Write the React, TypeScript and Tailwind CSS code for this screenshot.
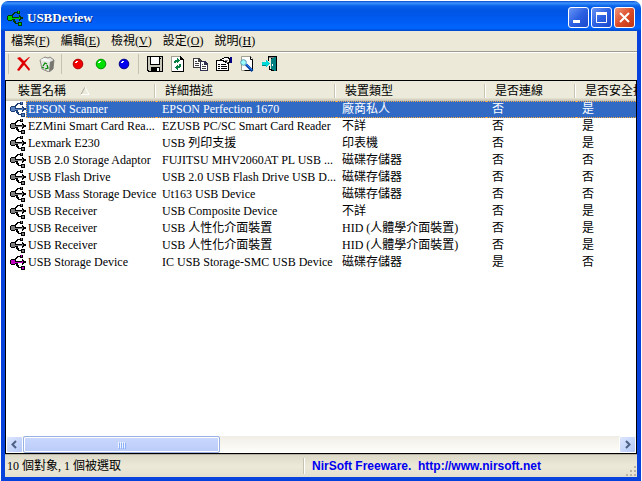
import type { ReactNode } from 'react';
import clsx from 'clsx';

type Device = {
  name: string;
  description: string;
  type: string;
  connected: string;
  safe: string;
  color: string;
  selected?: boolean;
};

const MENU = [
  { label: '檔案', hotkey: 'F' },
  { label: '編輯', hotkey: 'E' },
  { label: '檢視', hotkey: 'V' },
  { label: '設定', hotkey: 'O' },
  { label: '說明', hotkey: 'H' },
];

const COLUMNS = ['裝置名稱', '詳細描述', '裝置類型', '是否連線', '是否安全拔除'];

const GRAY = '#808080';

const DEVICES: Device[] = [
  { name: 'EPSON Scanner', description: 'EPSON Perfection 1670', type: '廠商私人', connected: '否', safe: '是', color: '#5a82c0', selected: true },
  { name: 'EZMini Smart Card Rea...', description: 'EZUSB PC/SC Smart Card Reader', type: '不詳', connected: '否', safe: '是', color: GRAY },
  { name: 'Lexmark E230', description: 'USB 列印支援', type: '印表機', connected: '否', safe: '是', color: GRAY },
  { name: 'USB 2.0 Storage Adaptor', description: 'FUJITSU MHV2060AT PL USB ...', type: '磁碟存儲器', connected: '否', safe: '否', color: GRAY },
  { name: 'USB Flash Drive', description: 'USB 2.0 USB Flash Drive USB D...', type: '磁碟存儲器', connected: '否', safe: '否', color: GRAY },
  { name: 'USB Mass Storage Device', description: 'Ut163 USB Device', type: '磁碟存儲器', connected: '否', safe: '否', color: GRAY },
  { name: 'USB Receiver', description: 'USB Composite Device', type: '不詳', connected: '否', safe: '是', color: GRAY },
  { name: 'USB Receiver', description: 'USB 人性化介面裝置', type: 'HID (人體學介面裝置)', connected: '否', safe: '是', color: GRAY },
  { name: 'USB Receiver', description: 'USB 人性化介面裝置', type: 'HID (人體學介面裝置)', connected: '否', safe: '是', color: GRAY },
  { name: 'USB Storage Device', description: 'IC USB Storage-SMC USB Device', type: '磁碟存儲器', connected: '是', safe: '否', color: '#c000c0' },
];

const Icon = ({ children }: { children: ReactNode }) => (
  <svg className="size-4 shrink-0" viewBox="0 0 16 16" shapeRendering="crispEdges" aria-hidden="true">
    {children}
  </svg>
);

const UsbIcon = ({ color, line = '#000' }: { color: string; line?: string }) => (
  <Icon>
    <path d="M1 5h4v1h1v1h6V5h1v1h1v1h2v2h-2v1h-1v1h-1V9H6v1H5v1H1v-1H0V6h1z" fill={line} />
    <path d="M1 6h4v4H1zM5 8h8v1H5zM12 7h1v2h-1z" fill={color} />
    <path d="M5 7V4h1V3h1V2h3v1H8v1H7v1H6v2zM10 1h3v3h-3z" fill={line} />
    <path d="M11 1h1v2h-1z" fill={color} />
    <path d="M7 9h1v2h1v2h2v-1h4v4h-4v-2H8v-1H7v-1H6V9z" fill={line} />
    <path d="M12 13h2v2h-2z" fill={color} />
  </Icon>
);

const DeleteIcon = () => (
  <svg className="size-4" viewBox="0 0 16 16" aria-hidden="true">
    <path d="M1 2l3-1 4 4 5-4h1L9 7l5 6-1 2-5-6-5 6-2-1 5-7z" fill="#e00000" />
  </svg>
);

const RecycleIcon = () => (
  <svg className="size-4" viewBox="0 0 16 16" aria-hidden="true">
    <path d="M1 4l5-3 3 1 2-1 4 3-1 9-4 3-7-3z" fill="#e4e4e0" stroke="#8a8a82" />
    <path d="M11 6l4-2-1 9-4 3z" fill="#77776f" />
    <path d="M1 4l4-2 6 2-1 2z" fill="#f8f8f8" />
    <path d="M4 10l2-3 2 1M8 9l1 3-3 1M3 11l2 1" fill="none" stroke="#008800" strokeWidth="1.3" />
  </svg>
);

const BallIcon = ({ color, edge }: { color: string; edge: string }) => (
  <svg className="size-4" viewBox="0 0 16 16" aria-hidden="true">
    <circle cx="8" cy="8" r="4.8" fill={color} stroke={edge} />
    <path d="M5 6h1V5h2v1H7v1H5z" fill="#fff" />
  </svg>
);

const SaveIcon = () => (
  <Icon>
    <path d="M0 0h16v16H1v-1H0z" fill="#000" />
    <path d="M1 1h2v8h10V1h2v14h-2v-4H4v4H2v-1H1z" fill="#c9c7ba" />
    <path d="M4 1h8v7H4z" fill="#fff" />
    <path d="M10 12h2v3h-2z" fill="#fff" />
    <path d="M13 2h1v1h-1z" fill="#000" />
  </Icon>
);

const RefreshIcon = () => (
  <Icon>
    <path d="M1 0h10v1h1v1h1v1h1v13H1z" fill="#000" />
    <path d="M2 1h8v3h3v11H2z" fill="#fff" />
    <path d="M1 0h1v16H1zM1 0h9v1H1z" fill="#a0a090" />
    <path d="M4 7V5h1V4h2V2h1v1h1v1h1v1H9v1H8v1H7V6H6v1zM11 8v3h-1v1H8v2H7v-1H6v-1H5v-1h1v-1h1V9h1v1h1V8z" fill="#008040" />
  </Icon>
);

const CopyIcon = () => (
  <Icon>
    <path d="M0 2h6l3 3v7H0z" fill="#404040" />
    <path d="M1 3h4v3h3v5H1z" fill="#fff" />
    <path d="M2 5h2v1H2zM2 7h4v1H2zM2 9h4v1H2z" fill="#404040" />
    <path d="M7 5h5l3 3v7H7z" fill="#303050" />
    <path d="M8 6h3v3h3v5H8z" fill="#fff" />
    <path d="M9 8h1v1H9zM9 10h4v1H9zM9 12h4v1H9z" fill="#404040" />
  </Icon>
);

const PropertiesIcon = () => (
  <Icon>
    <path d="M0 4h13v11H0z" fill="#000" />
    <path d="M1 5h11v9H1z" fill="#fff" />
    <path d="M2 8h2v1H2zM5 8h5v1H5zM2 10h2v1H2zM5 10h6v1H5zM2 12h2v1H2zM5 12h6v1H5z" fill="#000" />
    <path d="M4 3h2V2h2V1h5v1h3v5h-3v1h-2V7H9V6H7V5H4z" fill="#000" />
    <path d="M6 3h2V2h4v1h1v3h-2V5H8V4H6z" fill="#fff" />
    <path d="M9 4h3v1H9zM10 6h2v1h-2z" fill="#808080" />
    <path d="M14 1h2v6h-2z" fill="#000080" />
  </Icon>
);

const FindIcon = () => (
  <svg className="size-4" viewBox="0 0 16 16" aria-hidden="true">
    <path d="M2.500.5h9l2 2v12h-11z" fill="#fff" stroke="#a0a090" />
    <path d="M11.500.5v3h2v11h-8" fill="none" stroke="#000" />
    <circle cx="4.500" cy="6.500" r="2.800" fill="#9ff" stroke="#5a9ab0" />
    <path d="M7 8.500l6.500 6.500" stroke="#0040a0" strokeWidth="2.500" />
    <path d="M7 8l6 6" stroke="#2080ff" />
  </svg>
);

const ExitIcon = () => (
  <Icon>
    <path d="M6 0h9v15H9v-1H7v-4h1v3h1V2H7v3H6z" fill="#000" />
    <path d="M7 1h5v1H7z" fill="#808080" />
    <path d="M9 3h1V2h2V1h2v14h-2v-1h-2v-1H9z" fill="#008080" />
    <path d="M10 8h1v2h-1z" fill="#fff" />
    <path d="M0 6h4V4h1v1h1v1h1v1h1v1H7v1H6v1H5v1H4V9H0z" fill="#00d8d8" />
    <path d="M0 9h4v1H0z" fill="#008080" />
  </Icon>
);

const TOOLS: { label: string; icon: ReactNode }[][] = [
  [
    { label: 'Delete', icon: <DeleteIcon /> },
    { label: 'Uninstall', icon: <RecycleIcon /> },
  ],
  [
    { label: 'Disconnect', icon: <BallIcon color="#f00000" edge="#b00000" /> },
    { label: 'Enable', icon: <BallIcon color="#00e000" edge="#009000" /> },
    { label: 'Disable', icon: <BallIcon color="#0000f0" edge="#000080" /> },
  ],
  [
    { label: 'Save', icon: <SaveIcon /> },
    { label: 'Refresh', icon: <RefreshIcon /> },
    { label: 'Copy', icon: <CopyIcon /> },
    { label: 'Properties', icon: <PropertiesIcon /> },
    { label: 'Find', icon: <FindIcon /> },
    { label: 'Exit', icon: <ExitIcon /> },
  ],
];

const WindowButton = ({ label, close, children }: { label: string; close?: boolean; children: ReactNode }) => (
  <button
    aria-label={label}
    className={clsx(
      'size-[21px] rounded-[3px] border border-white bg-linear-to-br',
      close ? 'from-[#ee9478] via-[#dc4c28] to-[#c03410]' : 'from-[#6a94f4] via-[#2c60e2] to-[#1c48cc]',
    )}
  >
    <svg className="size-[19px]" viewBox="0 0 19 19" fill="none" stroke="#fff" aria-hidden="true">
      {children}
    </svg>
  </button>
);

const TitleBar = () => (
  <header className="flex h-[30px] shrink-0 items-center rounded-t-[7px] bg-[linear-gradient(#0a48c8_0,#3d95ff_2px,#0a62ea_5px,#0055e3_10px,#005cf4_20px,#0066ff_27px,#0048cc_30px)] px-[6px] pt-[3px]">
    <UsbIcon color="#00d000" line="#003800" />
    <h1 className="ml-1 flex-1 text-[13px] font-bold text-white [text-shadow:1px_1px_#0a2a80]">USBDeview</h1>
    <div className="flex gap-[2px]">
      <WindowButton label="Minimize">
        <path d="M4 13.500h7" strokeWidth="3" />
      </WindowButton>
      <WindowButton label="Maximize">
        <path d="M4.500 5v9.500h10V5" />
        <path d="M4 5.500h11" strokeWidth="3" />
      </WindowButton>
      <WindowButton label="Close" close>
        <path d="M5 5l9 9M14 5l-9 9" strokeWidth="2" />
      </WindowButton>
    </div>
  </header>
);

const MenuBar = () => (
  <nav className="flex h-5 shrink-0 items-center gap-px pl-px">
    {MENU.map(({ label, hotkey }) => (
      <button key={hotkey} className="px-[5px]">
        {label}(<u>{hotkey}</u>)
      </button>
    ))}
  </nav>
);

const ToolBar = () => (
  <div className="flex h-[29px] shrink-0 border-t border-[#9d9b8e] pl-[3px] shadow-[inset_0_1px_#fff]">
    {TOOLS.map((group, i) => (
      <div key={i} className="flex h-6 items-center">
        <span className={clsx('h-5 w-px bg-[#c5c2b2]', i === 0 ? 'mr-[3px]' : 'mr-1 ml-[3px]')} />
        {group.map(({ label, icon }) => (
          <button key={label} aria-label={label} className="flex h-[22px] w-[23px] items-center justify-center">
            {icon}
          </button>
        ))}
      </div>
    ))}
  </div>
);

const Cell = ({ selected, first, children }: { selected?: boolean; first?: boolean; children: ReactNode }) => (
  <div
    className={clsx(
      'h-[17px] flex-1 border-y border-dotted leading-[15px] whitespace-nowrap',
      first ? 'border-l pl-px' : 'pl-[6px]',
      selected ? 'border-[#f0a848] bg-[#316ac5] text-white' : 'border-transparent',
    )}
  >
    {children}
  </div>
);

const DeviceTable = () => (
  <div className="flex-1 overflow-hidden">
    <table className="w-[720px] table-fixed border-collapse text-left">
      <colgroup>
        <col className="w-[150px]" />
        <col className="w-[180px]" />
        <col className="w-[150px]" />
        <col className="w-[90px]" />
        <col />
      </colgroup>
      <thead>
        <tr className="bg-[linear-gradient(#ebeadb_17px,#e2decd_17px,#e2decd_18px,#d6d2c2_18px,#d6d2c2_19px,#cbc7b8_19px)]">
          {COLUMNS.map((title, i) => (
            <th key={title} className="h-5 p-0 font-normal">
              <div className={clsx('flex items-center whitespace-nowrap', i === 0 ? 'pl-3' : 'pl-[9px]')}>
                <span className="leading-[18px]">{title}</span>
                {i === 0 && (
                  <svg className="ml-[14px] size-[10px]" viewBox="0 0 10 10" fill="none" aria-hidden="true">
                    <path d="M5 1L1 8.500" stroke="#aca899" />
                    <path d="M5 1l4 7.500H1" stroke="#fff" />
                  </svg>
                )}
                <span className="ml-auto h-[14px] w-[2px] border-l border-[#c7c5b2] bg-white" />
              </div>
            </th>
          ))}
        </tr>
      </thead>
      <tbody>
        {DEVICES.map((device, i) => (
          <tr key={i}>
            <td className="p-0">
              <div className="flex pl-1">
                <UsbIcon color={device.color} line={device.selected ? '#1c3f78' : '#000'} />
                <Cell selected={device.selected} first>
                  {device.name}
                </Cell>
              </div>
            </td>
            {[device.description, device.type, device.connected, device.safe].map((text, j) => (
              <td key={j} className="p-0">
                <Cell selected={device.selected}>{text}</Cell>
              </td>
            ))}
          </tr>
        ))}
      </tbody>
    </table>
  </div>
);

const ScrollButton = ({ label, path }: { label: string; path: string }) => (
  <button
    aria-label={label}
    className="flex w-[17px] items-center justify-center rounded-[2px] border border-white bg-linear-to-br from-[#dce6fe] to-[#b4c8f6]"
  >
    <svg className="size-[9px]" viewBox="0 0 9 9" fill="none" stroke="#4d6185" strokeWidth="2" aria-hidden="true">
      <path d={path} />
    </svg>
  </button>
);

const ScrollBar = () => (
  <div className="flex h-[17px] shrink-0 bg-linear-to-b from-[#f0eee6] to-[#fefefb]">
    <ScrollButton label="Scroll left" path="M6 1L2.500 4.500 6 8" />
    <div className="flex flex-1">
      <div className="flex w-[33%] items-center justify-center gap-px rounded-[2px] border border-[#98b0e4] bg-linear-to-b from-[#cad8fd] to-[#bacbf8] shadow-[inset_0_0_0_1px_#fff]">
        {[0, 1, 2, 3].map((i) => (
          <span key={i} className="h-[6px] w-px bg-[#eef4fe] shadow-[1px_1px_#8cb0f8]" />
        ))}
      </div>
    </div>
    <ScrollButton label="Scroll right" path="M3 1l3.500 3.500L3 8" />
  </div>
);

const StatusBar = () => (
  <footer className="flex h-[23px] shrink-0 items-center border-t border-[#b5b2a2] bg-linear-to-b from-[#dedac9] via-[#ece9d8] to-[#e4e0cf]">
    <p className="w-[298px] truncate pl-[2px]">10 個對象, 1 個被選取</p>
    <div className="flex flex-1 items-center border-l border-[#c5c2b2] pl-2 shadow-[inset_1px_0_#fff]">
      <a
        href="http://www.nirsoft.net"
        className="flex-1 font-['Liberation_Sans',sans-serif] text-[12px] leading-4 font-bold whitespace-pre text-[#0000f0]"
      >
        {'NirSoft Freeware.  http://www.nirsoft.net'}
      </a>
    </div>
    <svg className="size-3 self-end" viewBox="0 0 12 12" shapeRendering="crispEdges" aria-hidden="true">
      <path d="M9 1h2v2H9zM5 5h2v2H5zM9 5h2v2H9zM1 9h2v2H1zM5 9h2v2H5zM9 9h2v2H9z" fill="#b8b4a2" />
    </svg>
  </footer>
);

export default function App() {
  return (
    <div className="flex h-screen flex-col bg-white px-px pt-px font-['Liberation_Serif','Noto_Sans_CJK_TC',serif] text-[12px] leading-4 text-black">
      <TitleBar />
      <main className="flex min-h-0 flex-1 flex-col border-x-4 border-b-4 border-[#0842dc] bg-[#ece9d8]">
        <MenuBar />
        <ToolBar />
        <section className="flex min-h-0 flex-1 flex-col border border-black bg-white">
          <DeviceTable />
          <ScrollBar />
        </section>
        <StatusBar />
      </main>
    </div>
  );
}
